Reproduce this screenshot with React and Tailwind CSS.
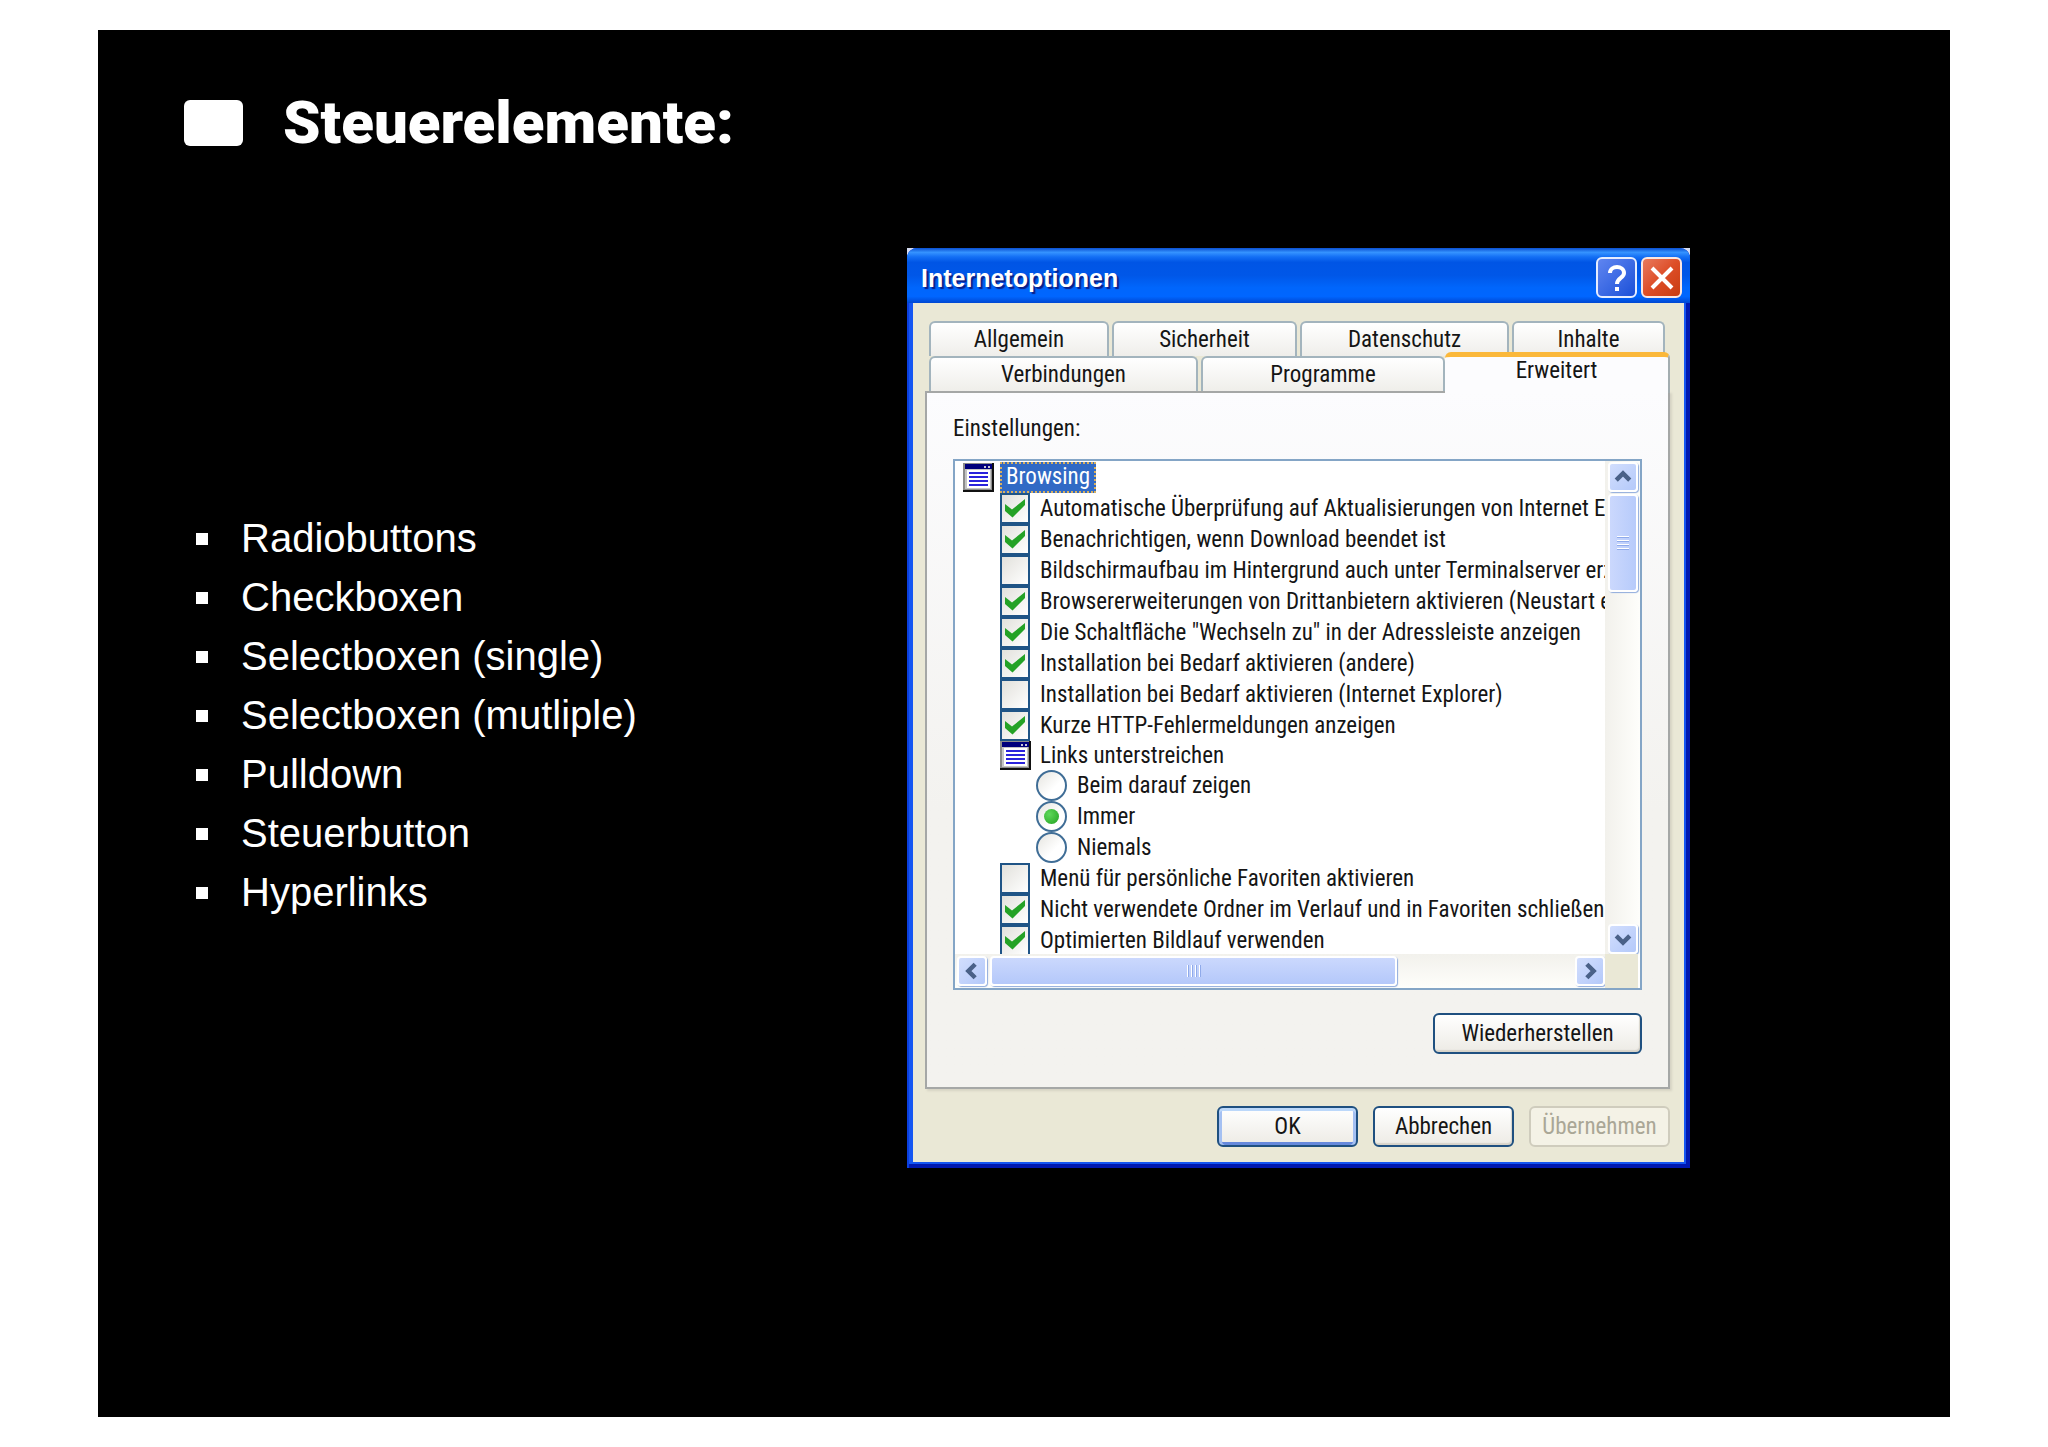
/**
 * App.jsx
 * Lecture slide: list of form controls next to the "Internetoptionen" dialog.
 */

import { useState } from "react";

const TOPICS = [
  "Radiobuttons",
  "Checkboxen",
  "Selectboxen (single)",
  "Selectboxen (mutliple)",
  "Pulldown",
  "Steuerbutton",
  "Hyperlinks",
];

const BACK_TABS = [
  { label: "Allgemein", width: "w-[180px]" },
  { label: "Sicherheit", width: "w-[185px]" },
  { label: "Datenschutz", width: "w-[209px]" },
  { label: "Inhalte", width: "w-[153px]" },
];

const FRONT_TABS = [
  { label: "Verbindungen", width: "w-[269px]" },
  { label: "Programme", width: "w-[244px]" },
];

const SETTINGS = [
  { type: "group", label: "Browsing", selected: true },
  { type: "check", label: "Automatische Überprüfung auf Aktualisierungen von Internet E", checked: true },
  { type: "check", label: "Benachrichtigen, wenn Download beendet ist", checked: true },
  { type: "check", label: "Bildschirmaufbau im Hintergrund auch unter Terminalserver erz", checked: false },
  { type: "check", label: "Browsererweiterungen von Drittanbietern aktivieren (Neustart e", checked: true },
  { type: "check", label: 'Die Schaltfläche "Wechseln zu" in der Adressleiste anzeigen', checked: true },
  { type: "check", label: "Installation bei Bedarf aktivieren (andere)", checked: true },
  { type: "check", label: "Installation bei Bedarf aktivieren (Internet Explorer)", checked: false },
  { type: "check", label: "Kurze HTTP-Fehlermeldungen anzeigen", checked: true },
  { type: "subgroup", label: "Links unterstreichen" },
  { type: "radio", label: "Beim darauf zeigen" },
  { type: "radio", label: "Immer" },
  { type: "radio", label: "Niemals" },
  { type: "check", label: "Menü für persönliche Favoriten aktivieren", checked: false },
  { type: "check", label: "Nicht verwendete Ordner im Verlauf und in Favoriten schließen", checked: true },
  { type: "check", label: "Optimierten Bildlauf verwenden", checked: true },
];

// ── Icons ─────────────────────────────────────────────────────────────────────
const GroupIcon = () => (
  <svg className="w-[31px] h-[29px] shrink-0" viewBox="0 0 31 29" aria-hidden="true">
    <rect width="31" height="29" fill="#111111" />
    <rect width="29" height="27" fill="#8c8c8c" />
    <rect x="2" y="1" width="27" height="5" fill="#00007c" />
    <rect x="21" y="3" width="2" height="2" fill="#c8c8d8" />
    <rect x="25" y="3" width="2" height="2" fill="#c8c8d8" />
    <rect x="2" y="6" width="26" height="20" fill="#c4c4c4" />
    <rect x="4" y="7" width="23" height="18" fill="#ffffff" />
    <path d="M6 10h19M6 14h19M6 18h19M6 22h19" stroke="#2a22dc" strokeWidth="2" />
  </svg>
);

const Chevron = ({ turn }) => (
  <svg className={`w-[18px] h-[18px] ${turn}`} viewBox="0 0 20 20" aria-hidden="true">
    <path d="M2.5 13.5 10 6l7.500 7.500" fill="none" stroke="#4a6188" strokeWidth="5" />
  </svg>
);

// ── Scroll bar parts ──────────────────────────────────────────────────────────
const ScrollButton = ({ label, turn = "" }) => (
  <button
    type="button"
    aria-label={label}
    className="flex h-[30px] w-[30px] shrink-0 items-center justify-center rounded border-2 border-white bg-linear-to-br from-[#d2defd] to-[#b4c9fa] shadow-[1px_1px_1px_#8fabdc]"
  >
    <Chevron turn={turn} />
  </button>
);

// ── Tree rows ─────────────────────────────────────────────────────────────────
const GroupRow = ({ item }) => (
  <div className={`flex flex-1 items-center ${item.selected ? "pl-[8px] gap-[6px]" : "pl-[45px] gap-[9px]"}`}>
    <GroupIcon />
    {item.selected ? (
      <span className="h-[31px] border-2 border-dotted border-[#d8b060] bg-[#316ac5] px-[4px] leading-[26px] text-white">
        {item.label}
      </span>
    ) : (
      <span>{item.label}</span>
    )}
  </div>
);

const CheckRow = ({ item }) => {
  const [checked, setChecked] = useState(item.checked);
  return (
    <label className="flex flex-1 items-center gap-[10px] pl-[45px]">
      <span className="relative h-[31px] w-[30px] shrink-0">
        <input
          type="checkbox"
          checked={checked}
          onChange={(e) => setChecked(e.target.checked)}
          className="block h-[31px] w-[30px] appearance-none border-2 border-[#1f5486] bg-linear-to-br from-[#e2e1dc] to-white"
        />
        {checked && (
          <svg className="pointer-events-none absolute inset-0 h-[31px] w-[30px]" viewBox="0 0 30 31" aria-hidden="true">
            <path d="M5 11 12 16.500 25 6v6L12.500 24.500 5 18z" fill="#24a226" />
          </svg>
        )}
      </span>
      <span>{item.label}</span>
    </label>
  );
};

const RadioRow = ({ item, value, onChange }) => (
  <label className="flex flex-1 items-center gap-[10px] pl-[81px]">
    <span className="relative h-[31px] w-[31px] shrink-0">
      <input
        type="radio"
        name="underline-links"
        checked={value === item.label}
        onChange={() => onChange(item.label)}
        className="block h-[31px] w-[31px] appearance-none rounded-full border-2 border-[#3f6d96] bg-linear-to-br from-[#e6e5e0] to-white to-60%"
      />
      {value === item.label && (
        <span className="pointer-events-none absolute inset-[8px] rounded-full bg-radial-[at_35%_35%] from-[#5fd85a] to-[#21a121]" />
      )}
    </span>
    <span>{item.label}</span>
  </label>
);

const SettingsTree = () => {
  const [underline, setUnderline] = useState("Immer");
  return (
    <div className="flex h-[493px] min-w-0 flex-1 flex-col overflow-hidden whitespace-nowrap pt-px">
      {SETTINGS.map((item) => {
        if (item.type === "check") return <CheckRow key={item.label} item={item} />;
        if (item.type === "radio") {
          return <RadioRow key={item.label} item={item} value={underline} onChange={setUnderline} />;
        }
        return <GroupRow key={item.label} item={item} />;
      })}
    </div>
  );
};

const SettingsBox = () => (
  <div role="group" aria-labelledby="settings-label" className="mt-[16px] border-2 border-[#84a5c6] bg-white">
    <div className="flex">
      <SettingsTree />
      {/* Vertical scroll bar */}
      <div className="flex w-[35px] flex-col items-center bg-linear-to-r from-[#f2f1ec] to-[#fefefb] pt-px">
        <ScrollButton label="Nach oben" />
        <div className="mt-[2px] flex h-[98px] w-[30px] flex-col items-center justify-center gap-[2px] rounded border-2 border-white bg-linear-to-r from-[#cbd8fd] to-[#b7cbfb] shadow-[1px_1px_1px_#8fabdc]">
          {[0, 1, 2, 3].map((i) => (
            <span key={i} className="h-[2px] w-[12px] border-b border-[#8faaea] bg-white" />
          ))}
        </div>
        <div className="flex-1" />
        <ScrollButton label="Nach unten" turn="rotate-180" />
      </div>
    </div>
    <div className="flex h-[34px]">
      {/* Horizontal scroll bar */}
      <div className="flex flex-1 items-center bg-linear-to-b from-[#f2f1ec] to-[#fefefb] pl-[2px]">
        <ScrollButton label="Nach links" turn="-rotate-90" />
        <div className="ml-[3px] flex h-[30px] w-[407px] items-center justify-center gap-[2px] rounded border-2 border-white bg-linear-to-b from-[#cbd8fd] to-[#b4c8fa] shadow-[1px_1px_1px_#8fabdc]">
          {[0, 1, 2, 3].map((i) => (
            <span key={i} className="h-[12px] w-[2px] border-r border-[#8faaea] bg-white" />
          ))}
        </div>
        <div className="flex-1" />
        <ScrollButton label="Nach rechts" turn="rotate-90" />
      </div>
      <div className="mr-[2px] w-[33px] bg-[#eae8d6]" />
    </div>
  </div>
);

// ── Tabs and buttons ──────────────────────────────────────────────────────────
const Tab = ({ label, width }) => (
  <button
    type="button"
    role="tab"
    aria-selected="false"
    className={`${width} h-[35px] rounded-t-md border-2 border-b-0 border-[#a3b4bd] bg-linear-to-b from-white to-[#efeeea]`}
  >
    {label}
  </button>
);

const DialogButton = ({ children, className = "w-[141px]", primary }) => (
  <button
    type="button"
    className={`${className} h-[41px] rounded-md border-2 border-[#1f5080] bg-linear-to-b from-white to-[#edebe5] ${
      primary ? "shadow-[inset_0_3px_0_#bcd8fa,inset_3px_0_0_#a4c0f2,inset_-3px_0_0_#a4c0f2,inset_0_-3px_0_#6689dc]" : "shadow-[inset_-1px_-2px_1px_#d8d4ca]"
    }`}
  >
    {children}
  </button>
);

const InternetOptions = () => (
  <div role="dialog" aria-labelledby="dialog-title" className="mr-[260px] w-[783px] shrink-0 bg-[#d5dcf2]">
    <div className="rounded-t-[10px] bg-[#1556f2] px-[6px] pb-[6px] font-['Roboto_Condensed',Roboto,sans-serif] text-[23px] leading-[28px] text-[#151515] shadow-[inset_2px_0_0_#0a3fe0,inset_-4px_-4px_0_#0018b0]">
      {/* Title bar */}
      <div className="-mx-[6px] flex h-[55px] items-center gap-[4px] rounded-t-[10px] bg-[linear-gradient(180deg,#0a4fd0_0%,#3593ff_8%,#1470f5_16%,#0055e5_26%,#0057e8_50%,#0066fc_72%,#0066ff_88%,#0047d2_100%)] pl-[14px] pr-[8px] pt-[4px]">
        <h2 id="dialog-title" className="flex-1 font-['Liberation_Sans',Arial,sans-serif] text-[25px] font-bold text-white [text-shadow:2px_2px_1px_#0a1f88]">
          Internetoptionen
        </h2>
        <button
          type="button"
          aria-label="Hilfe"
          className="flex h-[41px] w-[41px] items-center justify-center rounded-md border-2 border-[#e6edff] bg-linear-to-br from-[#5f85f0] to-[#1a4fd8]"
        >
          <svg className="h-[30px] w-[24px]" viewBox="0 0 24 30" aria-hidden="true">
            <path d="M5 10c0-8 14-8 14 0 0 5-7 5-7 11" fill="none" stroke="#ffffff" strokeWidth="4" />
            <rect x="10" y="24" width="4" height="4" fill="#ffffff" />
          </svg>
        </button>
        <button
          type="button"
          aria-label="Schließen"
          className="flex h-[41px] w-[41px] items-center justify-center rounded-md border-2 border-[#fbe6e0] bg-linear-to-br from-[#e8795c] via-[#dd4d26] to-[#c83c10]"
        >
          <svg className="h-[24px] w-[24px]" viewBox="0 0 24 24" aria-hidden="true">
            <path d="M2 2l20 20M22 2 2 22" stroke="#ffffff" strokeWidth="4" />
          </svg>
        </button>
      </div>

      <div className="bg-[#eae8d6] pb-[15px] pl-[12px] pr-[14px] pt-[18px]">
        <div role="tablist" className="px-[4px]">
          <div className="flex gap-[3px]">
            {BACK_TABS.map((tab) => (
              <Tab key={tab.label} {...tab} />
            ))}
          </div>
          <div className="-mr-[4px] flex items-end gap-[3px]">
            {FRONT_TABS.map((tab) => (
              <Tab key={tab.label} {...tab} />
            ))}
            <button
              type="button"
              role="tab"
              aria-selected="true"
              className="z-10 -mb-[2px] -ml-[3px] -mt-[4px] h-[41px] flex-1 rounded-t-md border-t-[5px] border-r-2 border-t-[#fbb83a] border-r-[#a3adb0] bg-[#fcfcfe] pb-[8px]"
            >
              Erweitert
            </button>
          </div>
        </div>

        <div role="tabpanel" className="border-2 border-[#a5a7a6] bg-linear-to-b from-[#fcfcfe] to-[#f3f2ef] to-60% pb-[33px] pl-[26px] pr-[26px] pt-[22px] shadow-[2px_2px_2px_#d6d3c4]">
          <p id="settings-label">Einstellungen:</p>
          <SettingsBox />
          <div className="mt-[23px] flex justify-end">
            <DialogButton className="w-[209px]">Wiederherstellen</DialogButton>
          </div>
        </div>

        <div className="mt-[17px] flex justify-end gap-[15px]">
          <DialogButton primary>OK</DialogButton>
          <DialogButton>Abbrechen</DialogButton>
          <button
            type="button"
            disabled
            className="h-[41px] w-[141px] rounded-md border-2 border-[#cfccbd] bg-[#f4f2e6] text-[#aaa796]"
          >
            Übernehmen
          </button>
        </div>
      </div>
    </div>
  </div>
);

const App = () => (
  <div className="flex min-h-screen bg-white px-[98px] py-[30px]">
    <main className="flex-1 bg-black text-white">
      <header className="flex items-center gap-[40px] pl-[86px] pt-[61px]">
        <span className="h-[46px] w-[59px] rounded-md bg-white" />
        <h1 className="font-[Roboto,'Liberation_Sans',sans-serif] text-[60px] font-black leading-[64px]">Steuerelemente:</h1>
      </header>

      <div className="mt-[93px] flex items-start">
        <ul className="flex-1 pl-[98px] pt-[261px] font-['Liberation_Sans',Arial,sans-serif] text-[40px] leading-[59px]">
          {TOPICS.map((topic) => (
            <li key={topic} className="flex items-center gap-[33px]">
              <span className="h-[12px] w-[12px] bg-white" />
              {topic}
            </li>
          ))}
        </ul>
        <InternetOptions />
      </div>
    </main>
  </div>
);

export default App;
